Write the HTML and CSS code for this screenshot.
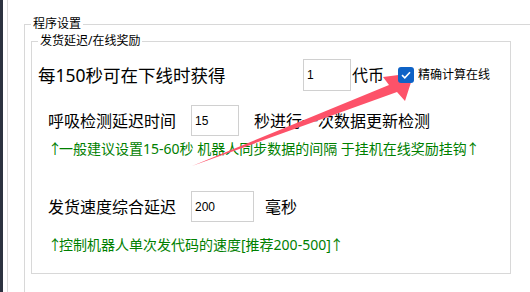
FILE: index.html
```html
<!DOCTYPE html>
<html lang="zh-CN">
<head>
  <meta charset="UTF-8" />
  <title>程序设置</title>
  <link rel="stylesheet" href="styles.css">
</head>
<body>
  <div class="edge"></div>
  <div class="rail"></div>
  <div class="main">
    <fieldset class="group outer">
      <legend>程序设置</legend>
      <fieldset class="group inner">
        <legend>发货延迟/在线奖励</legend>

        <div class="row first">
          <span class="lbl big w1">每150秒可在下线时获得</span>
          <input class="num" type="text" value="1" />
          <span class="lbl unit">代币</span>
          <label class="check">
            <span class="box"><svg width="10" height="8" viewBox="0 0 10 8"><path d="M1 4.2 L3.8 6.8 L9 1.2" fill="none" stroke="#fff" stroke-width="1.6"/></svg></span>
            <span>精确计算在线</span>
          </label>
        </div>

        <div class="row indent second">
          <span class="lbl w2">呼吸检测延迟时间</span>
          <input class="num" type="text" value="15" />
          <span class="lbl after">秒进行一次数据更新检测</span>
        </div>
        <p class="hint"><span class="up">↑</span>一般建议设置15-60秒 机器人同步数据的间隔 于挂机在线奖励挂钩<span class="up end">↑</span></p>

        <div class="row indent third">
          <span class="lbl w2">发货速度综合延迟</span>
          <input class="num wide" type="text" value="200" />
          <span class="lbl after2">毫秒</span>
        </div>
        <p class="hint last"><span class="up">↑</span>控制机器人单次发代码的速度[推荐200-500]<span class="up end">↑</span></p>
      </fieldset>
    </fieldset>
  </div>

  <svg class="arrow" width="530" height="292" viewBox="0 0 530 292">
    <polygon points="192,166 389,85 383,77 414,73 405,101 397,92" fill="#fd5269"/>
  </svg>
</body>
</html>
```

FILE: styles.css
```css
body,html{margin:0;padding:0;height:100%;background:#fff;}
body{display:flex;width:530px;height:292px;overflow:hidden;position:relative;font-family:"Noto Sans","Noto Sans CJK SC",sans-serif;color:#000;}
.edge{width:3px;background:#2c3240;flex:none;}
.rail{width:0;margin-left:4px;border-left:1px solid #dcdcdc;flex:none;}
.main{flex:1;padding:17px 0 0 16px;min-width:0;height:292px;box-sizing:border-box;overflow:hidden;}

.group{margin:0;border:1px solid #d8d8d8;}
.group legend{font-size:12px;line-height:14px;padding:0 2px;}
.outer{border-right:none;border-bottom:none;padding:0 0 0 6px;height:290px;}
.inner{width:472px;height:238px;padding:0 0 0 6px;margin-top:3px;}

.row{display:flex;align-items:center;}
.indent{margin-left:10px;}
.lbl{font-size:16px;line-height:20px;white-space:nowrap;}
.big{font-size:17.5px;}
.w1{width:265px;}
.w2{width:143px;}
.unit{margin-left:1px;}
.after{margin-left:15px;}
.after2{margin-left:11px;}

.num{box-sizing:border-box;width:48px;height:31px;border:1px solid #d0d0d0;padding:0 3px;font:12px "Liberation Sans",Arial,sans-serif;color:#000;margin:0;outline:none;}
.num.wide{width:63px;}
.first .num{height:32px;}

.check{display:flex;align-items:center;margin-left:14px;font-size:12px;line-height:16px;}
.box{width:16px;height:16px;border-radius:3px;background:#0e62c6;display:flex;align-items:center;justify-content:center;margin-right:4px;position:relative;z-index:1;}

.first{margin-top:11px;}
.second{margin-top:14px;}
.third{margin-top:33px;}
.hint{margin:4px 0 0 10px;font-size:14px;line-height:18px;color:#008000;white-space:nowrap;}
.hint .up{letter-spacing:-3px;}
.hint .end{margin-left:-1px;}
.hint.last{margin-top:14px;}

.arrow{position:absolute;left:0;top:0;pointer-events:none;}
```
